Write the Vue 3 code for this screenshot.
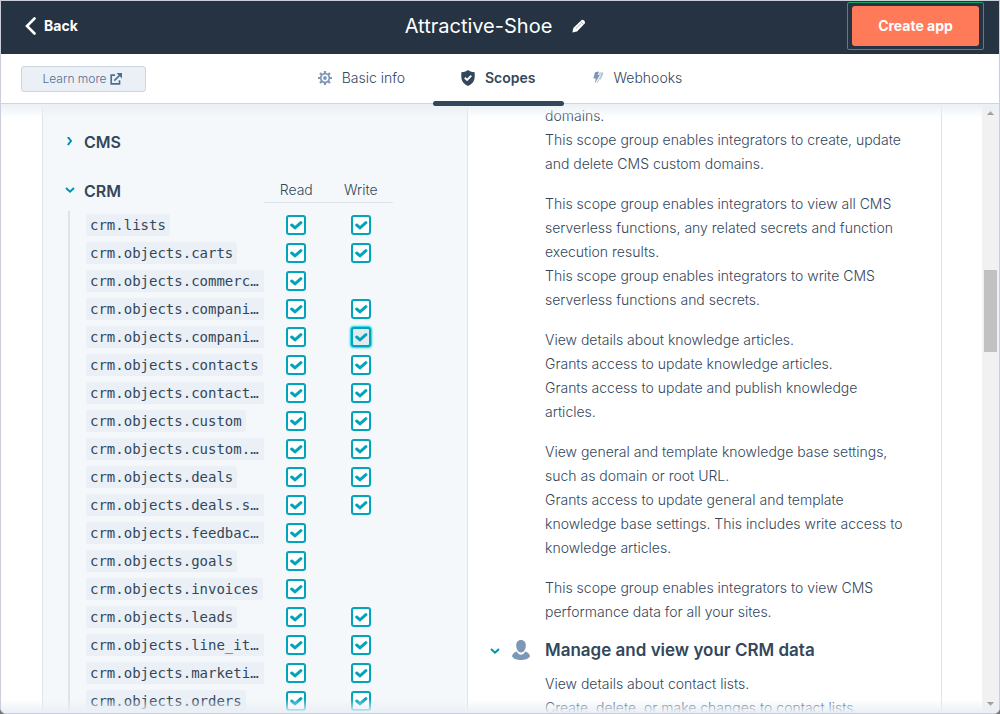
<script setup>
import { reactive } from 'vue'

const rows = reactive(
  [
    ['crm.lists', true],
    ['crm.objects.carts', true],
    ['crm.objects.commerc…', false],
    ['crm.objects.compani…', true],
    ['crm.objects.compani…', true, true],
    ['crm.objects.contacts', true],
    ['crm.objects.contact…', true],
    ['crm.objects.custom', true],
    ['crm.objects.custom.…', true],
    ['crm.objects.deals', true],
    ['crm.objects.deals.s…', true],
    ['crm.objects.feedbac…', false],
    ['crm.objects.goals', false],
    ['crm.objects.invoices', false],
    ['crm.objects.leads', true],
    ['crm.objects.line_it…', true],
    ['crm.objects.marketi…', true],
    ['crm.objects.orders', true],
  ].map(([name, hasWrite, active]) => ({ name, hasWrite, active, read: true, write: true }))
)

const groups = [
  ['domains.', 'This scope group enables integrators to create, update', 'and delete CMS custom domains.'],
  [
    'This scope group enables integrators to view all CMS',
    'serverless functions, any related secrets and function',
    'execution results.',
    'This scope group enables integrators to write CMS',
    'serverless functions and secrets.',
  ],
  [
    'View details about knowledge articles.',
    'Grants access to update knowledge articles.',
    'Grants access to update and publish knowledge',
    'articles.',
  ],
  [
    'View general and template knowledge base settings,',
    'such as domain or root URL.',
    'Grants access to update general and template',
    'knowledge base settings. This includes write access to',
    'knowledge articles.',
  ],
  ['This scope group enables integrators to view CMS', 'performance data for all your sites.'],
]
const crmLines = ['View details about contact lists.', 'Create, delete, or make changes to contact lists.']
</script>

<template>
  <div class="shell">
    <header class="topbar">
      <button class="back" type="button">
        <svg width="11" height="18" viewBox="0 0 11 18"><path d="M9.5 1.5 2 9l7.5 7.5" fill="none" stroke="#fff" stroke-width="2.6" stroke-linecap="round" /></svg>
        Back
      </button>
      <div class="title">
        <h1>Attractive-Shoe</h1>
        <button class="edit" type="button" aria-label="Edit name">
          <svg width="14" height="14" viewBox="0 0 14 14">
            <path d="M.4 13.6 1.3 9 9.4 1.2c1.500-1.300 4.500 1.500 3.300 3.200L5 12.600z" fill="#fff" />
            <path d="M4 9.500 9 4.600M8.800 2.700l2.600 2.600" stroke="#253342" stroke-width=".4" fill="none" />
          </svg>
        </button>
      </div>
      <div class="create-ring"><button class="create" type="button">Create app</button></div>
    </header>

    <nav class="tabs">
      <a class="learn" href="#learn">
        Learn more
        <svg width="12" height="12" viewBox="0 0 12 12">
          <path d="M5 2.200H1.200v8.600h8.300V7.200M4.300 7.700 10 2" fill="none" stroke="#506e91" stroke-width="1.700" />
          <path d="M6.500 0H12v5.500z" fill="#506e91" />
        </svg>
      </a>
      <div class="tablist">
        <a class="tab" href="#basic">
          <svg width="14" height="14" viewBox="0 0 14 14" fill="none" stroke="#7c98b6">
            <circle cx="7" cy="7" r="4.300" stroke-width="1.700" />
            <circle cx="7" cy="7" r="1.900" fill="#7c98b6" stroke="none" />
            <path d="M7 0v2.500M7 11.500V14M0 7h2.500M11.500 7H14M2 2l2 2M10 10l2 2M12 2l-2 2M4 10l-2 2" stroke-width="2.200" />
          </svg>
          Basic info
        </a>
        <a class="tab active" href="#scopes">
          <svg width="14" height="16" viewBox="0 0 14 16">
            <path d="M7 0 9 1.300c1.500.7 3 1 4.700 1v4.500c0 4.500-3 7.500-6.700 9.200C3.300 14.300.3 11.300.3 6.800V2.300c1.700 0 3.200-.3 4.700-1z" fill="#33475b" />
            <path d="m3.800 7.700 2.300 2.200 4.200-4.200" fill="none" stroke="#fff" stroke-width="1.900" />
          </svg>
          Scopes
        </a>
        <a class="tab" href="#webhooks">
          <svg width="12" height="14" viewBox="0 0 12 14">
            <path d="M3 1.200 7 .6 5.900 4h2L2.800 12.500l1-5H1.300z" fill="#7c98b6" />
            <path d="M8.300 1.200 7.600 3.300h2.200L5 12M10.200 1 9.700 2.400h1.300L8.300 8.600" fill="none" stroke="#7c98b6" stroke-width=".6" />
          </svg>
          Webhooks
        </a>
      </div>
    </nav>

    <main class="body">
      <div class="columns">
        <section class="picker">
          <button class="toggle cms" type="button">
            <svg width="10" height="10" viewBox="0 0 10 10"><path d="m2.800 0 3.200 4-3.200 4" /></svg>
            CMS
          </button>
          <table class="scopes">
            <thead>
              <tr>
                <th class="name">
                  <button class="toggle" type="button">
                    <svg width="10" height="10" viewBox="0 0 10 10"><path d="m1 2 4 3.700 4-3.700" /></svg>
                    CRM
                  </button>
                </th>
                <th class="perm"><span>Read</span></th>
                <th class="perm"><span>Write</span></th>
              </tr>
            </thead>
            <tbody>
              <tr v-for="(row, i) in rows" :key="i">
                <td>
                  <div class="scope"><code :class="{ cut: row.name.endsWith('…') }">{{ row.name }}</code></div>
                </td>
                <td>
                  <label class="check">
                    <input v-model="row.read" type="checkbox" :aria-label="row.name + ' read'" />
                    <svg width="14" height="12" viewBox="0 0 14 12"><path d="m2.700 6 3.300 2.800 5.900-5.100" /></svg>
                  </label>
                </td>
                <td>
                  <label v-if="row.hasWrite" class="check" :class="{ focus: row.active }">
                    <input v-model="row.write" type="checkbox" :aria-label="row.name + ' write'" />
                    <svg width="14" height="12" viewBox="0 0 14 12"><path d="m2.700 6 3.300 2.800 5.900-5.100" /></svg>
                  </label>
                </td>
              </tr>
            </tbody>
          </table>
        </section>

        <section class="details">
          <p v-for="(lines, i) in groups" :key="i">
            <span v-for="line in lines" :key="line">{{ line }}</span>
          </p>
          <h2>
            <button class="toggle" type="button" aria-label="Collapse section">
              <svg width="10" height="10" viewBox="0 0 10 10"><path d="m1 4 4 3.700 4-3.700" /></svg>
            </button>
            <svg width="18" height="20" viewBox="0 0 18 20" fill="#7c98b6">
              <path d="M9 0c3.200 0 4.800 2.300 4.800 5.500 0 3.700-2 7-4.800 7s-4.800-3.300-4.800-7C4.200 2.300 5.800 0 9 0z" />
              <path d="M4.700 11.500C6 14 7.500 14.700 9 14.700s3-.7 4.300-3.200c2.500.8 4.400 2.500 4.700 4.700C16.500 19 12.500 20 9 20s-7.500-1-9-3.800c.3-2.200 2.200-3.900 4.700-4.700z" />
            </svg>
            Manage and view your CRM data
          </h2>
          <p><span v-for="line in crmLines" :key="line">{{ line }}</span></p>
        </section>
      </div>

      <div class="scrollbar">
        <svg width="7" height="4" viewBox="0 0 7 4"><path d="M0 4 3.500 0 7 4z" fill="#7f7f7f" /></svg>
        <div class="before"></div>
        <div class="thumb"></div>
        <div class="after"></div>
        <svg width="7" height="4" viewBox="0 0 7 4"><path d="m0 0 3.500 4L7 0z" fill="#7f7f7f" /></svg>
      </div>
      <div class="fade top"></div>
      <div class="fade bottom"></div>
    </main>
  </div>
</template>

<style>
html {
  background: #777;
}
</style>

<style scoped>
* {
  box-sizing: border-box;
}
.shell {
  display: flex;
  flex-direction: column;
  height: 100vh;
  overflow: hidden;
  border: 1px solid #cbcdda;
  border-radius: 0 0 6px 6px;
  background: #fff;
  color: #33475b;
  font: 300 14px/24px Inter, 'Noto Sans', sans-serif;
}
button {
  border: 0;
  padding: 0;
  background: none;
  color: inherit;
  font: inherit;
  cursor: pointer;
}
a {
  color: inherit;
  text-decoration: none;
}
svg {
  flex: none;
}
.topbar {
  display: grid;
  grid-template-columns: 1fr auto 1fr;
  align-items: center;
  flex: none;
  height: 53px;
  padding: 0 15px 4px 24px;
  background: #253342;
  color: #fff;
}
.back {
  display: flex;
  align-items: center;
  gap: 8px;
  justify-self: start;
  font-weight: 700;
}
.title {
  display: flex;
  align-items: center;
  gap: 20px;
  padding-right: 18px;
}
h1 {
  margin: 0;
  font-size: 20px;
  font-weight: 400;
}
.edit {
  display: flex;
}
.create-ring {
  justify-self: end;
  padding: 3px 4px;
  border: 1px solid #1fa463;
  border-radius: 2px;
}
.create {
  display: block;
  width: 127px;
  height: 40px;
  border-radius: 3px;
  background: #ff7a59;
  font-weight: 700;
}
.tabs {
  display: grid;
  grid-template-columns: 1fr auto 1fr;
  align-items: center;
  flex: none;
  height: 50px;
  padding: 0 20px;
  border-bottom: 1px solid #cbd6e2;
}
.learn {
  display: flex;
  align-items: center;
  justify-content: center;
  gap: 4px;
  justify-self: start;
  width: 125px;
  height: 26px;
  padding-right: 2px;
  border: 1px solid #cbd6e2;
  border-radius: 3px;
  background: #eaf0f6;
  color: #506e91;
  font-size: 12px;
}
.tablist {
  display: flex;
  align-self: stretch;
}
.tab {
  position: relative;
  display: flex;
  align-items: center;
  gap: 10px;
  padding: 0 28px 2px;
}
.tab.active {
  font-weight: 600;
}
.tab.active::after {
  content: '';
  position: absolute;
  inset: auto 0 -3px;
  z-index: 2;
  height: 5px;
  border-radius: 3px;
  background: #33475b;
}
.body {
  position: relative;
  display: flex;
  flex: 1;
  min-height: 0;
  overflow: hidden;
}
.columns {
  display: grid;
  grid-template-columns: 426fr 474fr;
  flex: 1;
  padding: 0 40px 0 41px;
}
.picker {
  padding: 26px 0 0 22px;
  border: solid #dfe3eb;
  border-width: 0 1px;
  background: #f5f8fa;
}
.toggle {
  display: flex;
  align-items: center;
  gap: 9px;
  height: 24px;
  font-size: 16px;
  font-weight: 600;
}
.toggle path {
  fill: none;
  stroke: #0091ae;
  stroke-width: 2;
}
.cms {
  margin-bottom: 19px;
}
.scopes {
  width: 328px;
  table-layout: fixed;
  border-collapse: collapse;
}
th,
td {
  padding: 0;
  font-weight: 300;
}
th {
  height: 38px;
  vertical-align: top;
}
th .toggle {
  margin-top: 6px;
}
th.name {
  width: 199px;
}
.perm span {
  display: block;
  height: 30px;
  padding-top: 5px;
  border-bottom: 1px solid #dfe3eb;
}
.scope {
  display: flex;
  align-items: center;
  height: 28px;
  margin-left: 3px;
  padding-left: 16px;
  border-left: 2px solid #dfe3eb;
}
code {
  height: 22px;
  padding: 0 4px;
  border-radius: 3px;
  background: #eaf0f6;
  font: 14px/22px 'DejaVu Sans Mono', monospace;
  white-space: nowrap;
}
code.cut {
  flex: 1;
  border-radius: 3px 0 0 3px;
}
.check {
  display: grid;
  place-items: center;
  width: 20px;
  height: 20px;
  margin: 0 auto;
}
.check input,
.check svg {
  grid-area: 1 / 1;
}
.check input {
  appearance: none;
  width: 20px;
  height: 20px;
  margin: 0;
  border: 2px solid #00a4bd;
  border-radius: 3px;
  background: #fff;
}
.check.focus input {
  background: #e5eaf0;
  box-shadow: 0 0 2px 1px #00d0e4;
}
.check svg {
  pointer-events: none;
  visibility: hidden;
}
.check input:checked + svg {
  visibility: visible;
}
.check path {
  fill: none;
  stroke: #00a4bd;
  stroke-width: 3;
  stroke-linecap: round;
}
.details {
  padding-left: 77px;
  border-right: 1px solid #dfe3eb;
}
.details p {
  margin: 0 0 16px;
}
.details p span {
  display: block;
  white-space: nowrap;
}
.details h2 {
  display: flex;
  align-items: center;
  margin: -2px 0 10px -55px;
  font-size: 17px;
  font-weight: 600;
  gap: 15px;
}
.details .toggle {
  margin-right: -3px;
}
.scrollbar {
  display: flex;
  flex-direction: column;
  align-items: center;
  flex: none;
  width: 17px;
  padding: 7px 0;
  background: #f1f1f1;
}
.before {
  flex: 155;
}
.thumb {
  flex: 82;
  width: 13px;
  background: #c1c1c1;
}
.after {
  flex: 350;
}
.fade {
  position: absolute;
  left: 0;
  right: 0;
  height: 14px;
  pointer-events: none;
}
.fade.top {
  top: 0;
  background: linear-gradient(#eaf0f6, rgba(234, 240, 246, 0));
}
.fade.bottom {
  bottom: 0;
  background: linear-gradient(rgba(234, 240, 246, 0), #eaf0f6);
}
</style>
